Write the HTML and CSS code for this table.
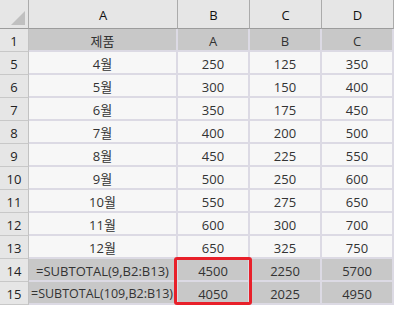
FILE: index.html
```html
<!DOCTYPE html>
<html lang="ko">
<head>
<meta charset="utf-8">
<link rel="stylesheet" href="styles.css">
</head>
<body>
<div class="sheet">
  <div class="grid">
    <div class="corner"><span class="tri"></span></div>
    <div class="colhdr">A</div>
    <div class="colhdr">B</div>
    <div class="colhdr">C</div>
    <div class="colhdr">D</div>

    <div class="rowhdr">1</div>
    <div class="cell head">제품</div><div class="cell head">A</div><div class="cell head">B</div><div class="cell head">C</div>

    <div class="rowhdr">5</div>
    <div class="cell">4월</div><div class="cell">250</div><div class="cell">125</div><div class="cell">350</div>
    <div class="rowhdr">6</div>
    <div class="cell">5월</div><div class="cell">300</div><div class="cell">150</div><div class="cell">400</div>
    <div class="rowhdr">7</div>
    <div class="cell">6월</div><div class="cell">350</div><div class="cell">175</div><div class="cell">450</div>
    <div class="rowhdr">8</div>
    <div class="cell">7월</div><div class="cell">400</div><div class="cell">200</div><div class="cell">500</div>
    <div class="rowhdr">9</div>
    <div class="cell">8월</div><div class="cell">450</div><div class="cell">225</div><div class="cell">550</div>
    <div class="rowhdr">10</div>
    <div class="cell">9월</div><div class="cell">500</div><div class="cell">250</div><div class="cell">600</div>
    <div class="rowhdr">11</div>
    <div class="cell">10월</div><div class="cell">550</div><div class="cell">275</div><div class="cell">650</div>
    <div class="rowhdr">12</div>
    <div class="cell">11월</div><div class="cell">600</div><div class="cell">300</div><div class="cell">700</div>
    <div class="rowhdr">13</div>
    <div class="cell">12월</div><div class="cell">650</div><div class="cell">325</div><div class="cell">750</div>
    <div class="rowhdr">14</div>
    <div class="cell total">=SUBTOTAL(9,B2:B13)</div><div class="cell total">4500</div><div class="cell total">2250</div><div class="cell total">5700</div>
    <div class="rowhdr">15</div>
    <div class="cell total clip"><span>=SUBTOTAL(109,B2:B13)</span></div><div class="cell total">4050</div><div class="cell total">2025</div><div class="cell total">4950</div>
  </div>
  <div class="highlight"></div>
</div>
</body>
</html>
```
FILE: styles.css
```css
html, body {
  margin: 0;
  padding: 0;
  background: #ffffff;
}
body {
  font-family: "Open Sans", "Noto Sans CJK KR", sans-serif;
  font-size: 13px;
  color: #333333;
}
.sheet {
  position: relative;
  width: 399px;
  height: 313px;
  overflow: hidden;
}
.grid {
  display: grid;
  grid-template-columns: 29px 149px 72px 72px 72px;
  grid-template-rows: 29px repeat(12, 23px);
  width: 394px;
}
.corner {
  position: relative;
  background: #e6e6e6;
  border-right: 1px solid #ababab;
  border-bottom: 1px solid #9c9c9c;
}
.tri {
  position: absolute;
  right: 3px;
  bottom: 3px;
  width: 0;
  height: 0;
  border-left: 14px solid transparent;
  border-bottom: 14px solid #c0c0c0;
}
.colhdr {
  background: #e6e6e6;
  border-right: 1px solid #ababab;
  border-bottom: 1px solid #9c9c9c;
  display: flex;
  align-items: center;
  justify-content: center;
  color: #111;
  padding-top: 1px;
}
.rowhdr {
  background: #e6e6e6;
  border-right: 1px solid #c2c2c2;
  border-bottom: 1px solid #c8c8c8;
  display: flex;
  align-items: center;
  justify-content: center;
  color: #222;
  padding-top: 2px;
}
.cell {
  background: #f7f7f7;
  border-right: 2px solid #dcdae4;
  border-bottom: 2px solid #dcdae4;
  display: flex;
  align-items: center;
  justify-content: center;
  padding-top: 2px;
  white-space: nowrap;
  overflow: hidden;
}
.cell.head, .cell.total {
  background: #c8c8c8;
}
.clip {
  justify-content: flex-start;
}
.clip span {
  padding-left: 2px;
  font-size: 12.5px;
}
.highlight {
  position: absolute;
  left: 174px;
  top: 257px;
  width: 72px;
  height: 42px;
  border: 3px solid #e8202a;
  border-radius: 3px;
}
```
